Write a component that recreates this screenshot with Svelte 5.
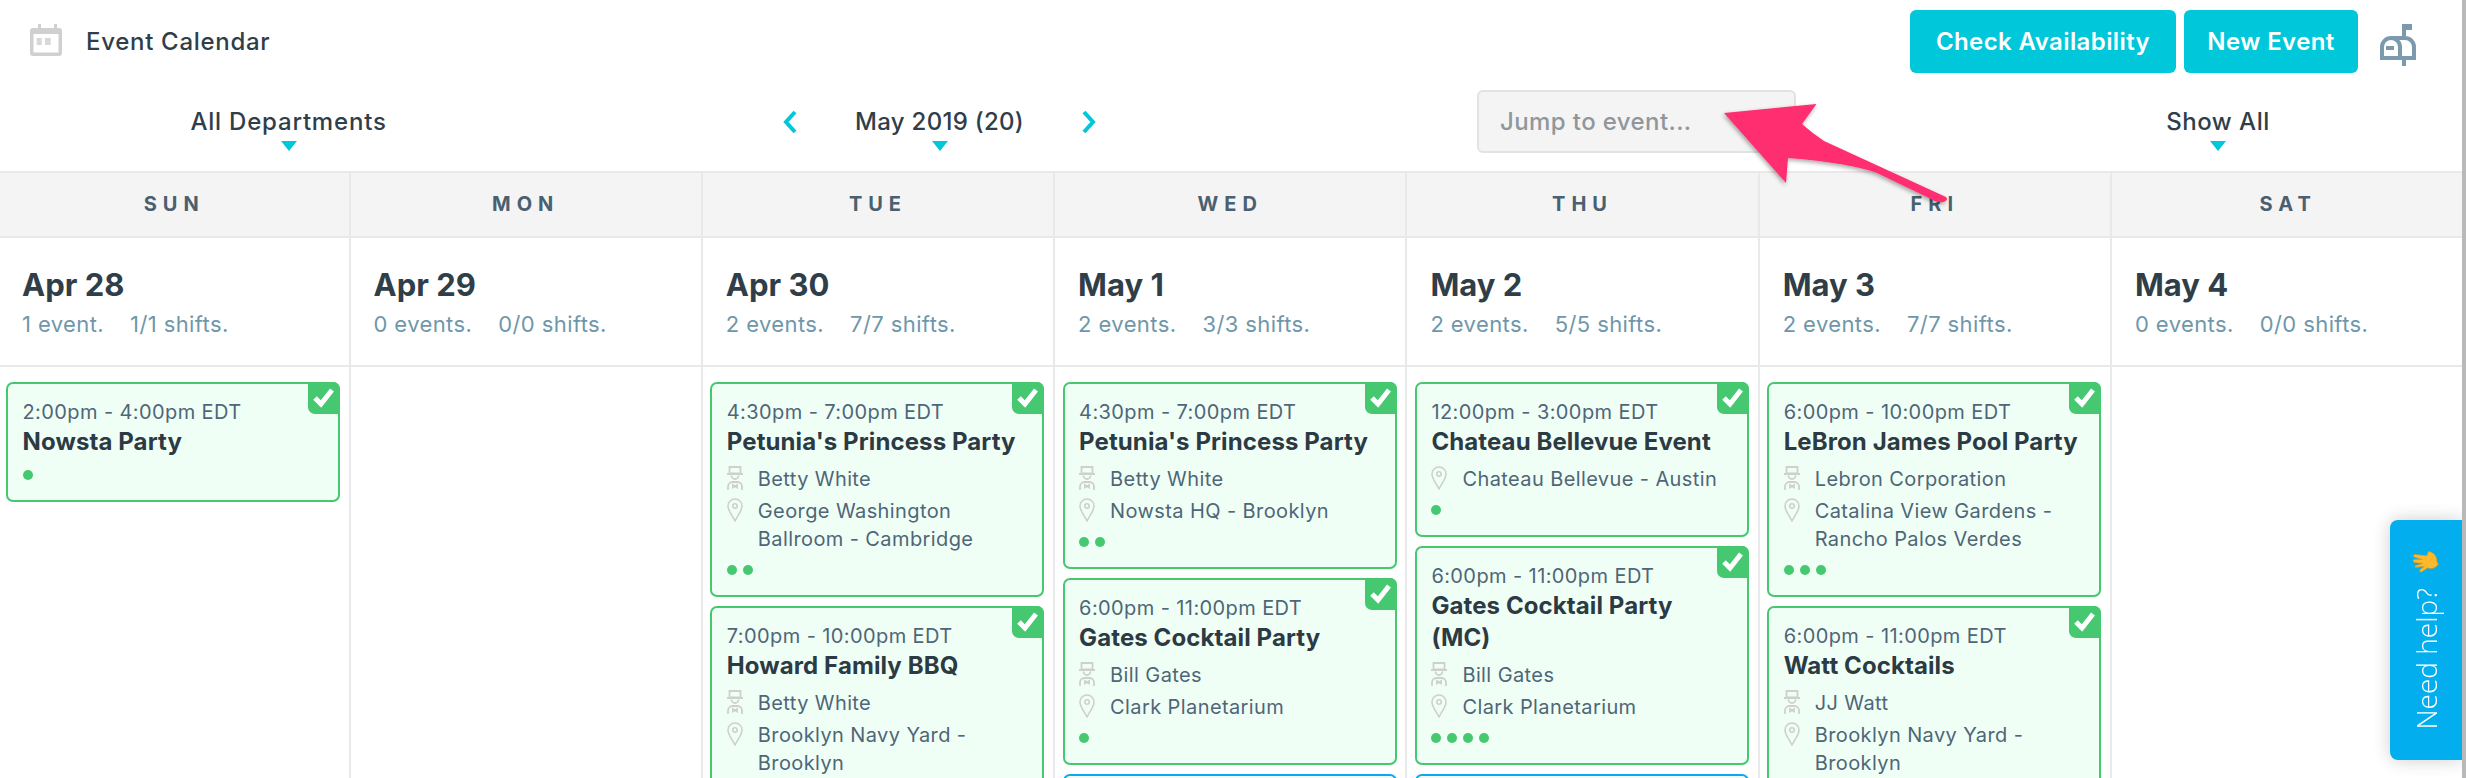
<script lang="ts">
	type Shift = {
		time: string;
		title: string;
		client?: string;
		venue?: string;
		dots: number;
		tone?: string;
	};

	const days: { name: string; date: string; events: string; shifts: string; cards: Shift[] }[] = [
		{
			name: 'SUN', date: 'Apr 28', events: '1 event.', shifts: '1/1 shifts.',
			cards: [{ time: '2:00pm - 4:00pm EDT', title: 'Nowsta Party', dots: 1 }]
		},
		{ name: 'MON', date: 'Apr 29', events: '0 events.', shifts: '0/0 shifts.', cards: [] },
		{
			name: 'TUE', date: 'Apr 30', events: '2 events.', shifts: '7/7 shifts.',
			cards: [
				{ time: '4:30pm - 7:00pm EDT', title: "Petunia's Princess Party", client: 'Betty White', venue: 'George Washington Ballroom - Cambridge', dots: 2 },
				{ time: '7:00pm - 10:00pm EDT', title: 'Howard Family BBQ', client: 'Betty White', venue: 'Brooklyn Navy Yard - Brooklyn', dots: 3 }
			]
		},
		{
			name: 'WED', date: 'May 1', events: '2 events.', shifts: '3/3 shifts.',
			cards: [
				{ time: '4:30pm - 7:00pm EDT', title: "Petunia's Princess Party", client: 'Betty White', venue: 'Nowsta HQ - Brooklyn', dots: 2 },
				{ time: '6:00pm - 11:00pm EDT', title: 'Gates Cocktail Party', client: 'Bill Gates', venue: 'Clark Planetarium', dots: 1 },
				{ time: '', title: '', dots: 0, tone: 'blue' }
			]
		},
		{
			name: 'THU', date: 'May 2', events: '2 events.', shifts: '5/5 shifts.',
			cards: [
				{ time: '12:00pm - 3:00pm EDT', title: 'Chateau Bellevue Event', venue: 'Chateau Bellevue - Austin', dots: 1 },
				{ time: '6:00pm - 11:00pm EDT', title: 'Gates Cocktail Party (MC)', client: 'Bill Gates', venue: 'Clark Planetarium', dots: 4 },
				{ time: '', title: '', dots: 0, tone: 'blue' }
			]
		},
		{
			name: 'FRI', date: 'May 3', events: '2 events.', shifts: '7/7 shifts.',
			cards: [
				{ time: '6:00pm - 10:00pm EDT', title: 'LeBron James Pool Party', client: 'Lebron Corporation', venue: 'Catalina View Gardens - Rancho Palos Verdes', dots: 3 },
				{ time: '6:00pm - 11:00pm EDT', title: 'Watt Cocktails', client: 'JJ Watt', venue: 'Brooklyn Navy Yard - Brooklyn', dots: 3 }
			]
		},
		{ name: 'SAT', date: 'May 4', events: '0 events.', shifts: '0/0 shifts.', cards: [] }
	];
</script>

<div class="page">
	<header class="topbar">
		<div class="brand">
			<svg class="cal-icon" viewBox="0 0 32 32" width="32" height="32">
				<path d="M8 0h3v5H8zM24 0h3v5h-3z" fill="#d0d0d0" />
				<path fill-rule="evenodd" d="M3 4h26a3 3 0 0 1 3 3v22a3 3 0 0 1-3 3H3a3 3 0 0 1-3-3V7a3 3 0 0 1 3-3zM3.500 10v18.500h25V10z" fill="#d0d0d0" />
				<rect x="6.700" y="14" width="5" height="7" fill="#d8d8d8" />
				<rect x="15" y="14" width="5.700" height="7" fill="#d8d8d8" />
			</svg>
			<span>Event Calendar</span>
		</div>
		<div class="actions">
			<button class="btn check">Check Availability</button>
			<button class="btn new">New Event</button>
			<svg class="mailbox" viewBox="0 0 36 42" width="36" height="42">
				<path d="M22 0h10v6H26v6h-4zM22 36h4v6h-4z" fill="#7c9aad" />
				<path d="M2 34V23a9 9 0 0 1 9-9h14a9 9 0 0 1 9 9v11zM20 34V23a9 9 0 0 0-9-9" fill="none" stroke="#7c9aad" stroke-width="4" />
				<rect x="6" y="22" width="8" height="4" fill="#7c9aad" />
			</svg>
		</div>
	</header>

	<div class="filters">
		<div class="filter departments"><span>All Departments</span><i class="caret"></i></div>
		<div class="month">
			<svg viewBox="0 0 16 24" width="16" height="24"><path d="M13 2 4 12l9 10" fill="none" stroke="#00c7d9" stroke-width="4" /></svg>
			<div class="filter"><span>May 2019 (20)</span><i class="caret"></i></div>
			<svg viewBox="0 0 16 24" width="16" height="24"><path d="m3 2 9 10-9 10" fill="none" stroke="#00c7d9" stroke-width="4" /></svg>
		</div>
		<input class="jump" placeholder="Jump to event..." />
		<div class="filter showall"><span>Show All</span><i class="caret"></i></div>
	</div>

	<section class="week">
		{#each days as day}
			<div class="day">
				<div class="day-name">{day.name}</div>
				<div class="day-info">
					<h2>{day.date}</h2>
					<p><span>{day.events}</span><span>{day.shifts}</span></p>
				</div>
				<div class="day-cards">
					{#each day.cards as card}
						<article class="card {card.tone ?? ''}">
							{#if !card.tone}
								<div class="tick">
									<svg viewBox="0 0 32 32" width="32" height="32"><path d="M7 16l6 6L24 8" fill="none" stroke="#fff" stroke-width="5" /></svg>
								</div>
							{/if}
							<div class="time">{card.time}</div>
							<div class="title">{card.title}</div>
							{#if card.client || card.venue}
								<div class="rows">
									{#if card.client}
										<div class="row">
											<svg viewBox="0 0 16 24" width="16" height="24">
												<path d="M2.500 1h11v6.500h-11zM0 8h16M4.500 9.500a3.500 3.500 0 0 0 7 0M1 24v-3.500A4.500 4.500 0 0 1 5.500 16h5a4.500 4.500 0 0 1 4.500 4.500V24M6 19l4 2.500V19l-4 2.500z" fill="none" stroke="#cfcfcf" stroke-width="1.800" />
											</svg>
											<span>{card.client}</span>
										</div>
									{/if}
									{#if card.venue}
										<div class="row">
											<svg viewBox="0 0 16 24" width="16" height="24">
												<path d="M8 23C5 17 1 13 1 8a7 7 0 0 1 14 0c0 5-4 9-7 15z" fill="none" stroke="#cfcfcf" stroke-width="1.600" />
												<circle cx="8" cy="8" r="2.200" fill="none" stroke="#cfcfcf" stroke-width="1.600" />
											</svg>
											<span>{card.venue}</span>
										</div>
									{/if}
								</div>
							{/if}
							<div class="dots">
								{#each Array(card.dots) as _}
									<i></i>
								{/each}
							</div>
						</article>
					{/each}
				</div>
			</div>
		{/each}
	</section>

	<svg class="arrow" viewBox="0 0 240 110" width="240" height="110">
		<defs>
			<filter id="arrow-shadow" x="-10%" y="-10%" width="120%" height="130%">
				<feDropShadow dx="-1" dy="2" stdDeviation="2" flood-color="#000" flood-opacity="0.35" />
			</filter>
		</defs>
		<path d="M4 13 96.500 4 82 24Q92 33 104 41L226 97q3 3-3 5-5 1-12-3L157 73Q130 63 68 58L66 83Z" fill="#ff2d6f" filter="url(#arrow-shadow)" />
	</svg>

	<aside class="help">
		<span>Need help?</span>
		<svg class="wave" viewBox="0 0 26 26" width="26" height="26">
			<path d="M24 13c1-6-3-10-7-11l-2 4L3 3C1 3 1 5 3 6l7 3-8-1c-2 0-2 2 0 3l8 2-7 1c-2 0-2 2 0 2l8 0-5 3c-1 1 0 3 2 2l6-3c3 2 7 2 11-2z" fill="#fdb92d" stroke="#e69a10" stroke-width="0.600" />
		</svg>
	</aside>
	<div class="edge"></div>
</div>

<style>
	:global(body) {
		margin: 0;
		overflow: hidden;
	}

	.page {
		position: relative;
		width: 2466px;
		height: 778px;
		overflow: hidden;
		background: #fff;
		color: #2f3e48;
		font-family: Inter, "Noto Sans", sans-serif;
	}

	.topbar {
		display: flex;
		justify-content: space-between;
		height: 83px;
		padding: 10px 50px 0 30px;
		box-sizing: border-box;
	}

	.brand {
		display: flex;
		align-items: flex-start;
		gap: 24px;
		padding-top: 14px;
		font-size: 24px;
		font-weight: 500;
		line-height: 36px;
		letter-spacing: 0.7px;
	}

	.cal-icon {
		display: block;
	}

	.actions {
		display: flex;
		align-items: flex-start;
		gap: 8px;
	}

	.btn {
		height: 63px;
		border: none;
		border-radius: 6px;
		background: #00c7d9;
		color: #fff;
		font: 600 24px Inter, "Noto Sans", sans-serif;
		letter-spacing: 0.4px;
		padding: 0;
	}

	.check {
		width: 266px;
	}

	.new {
		width: 174px;
	}

	.mailbox {
		margin: 14px 0 0 14px;
	}

	.filters {
		position: relative;
		height: 88px;
		padding-top: 7px;
		box-sizing: border-box;
		display: flex;
		align-items: flex-start;
	}

	.filter {
		display: flex;
		flex-direction: column;
		align-items: center;
		font-size: 24px;
		font-weight: 500;
		line-height: 32px;
		padding-top: 16px;
		white-space: nowrap;
	}

	.caret {
		margin-top: 3px;
		width: 0;
		height: 0;
		border-left: 8px solid transparent;
		border-right: 8px solid transparent;
		border-top: 10px solid #00c7d9;
	}

	.departments {
		margin-left: 191px;
		width: 195px;
		letter-spacing: 0.8px;
	}

	.month {
		display: flex;
		align-items: flex-start;
		gap: 57px;
		margin-left: 396px;
	}

	.month svg {
		margin-top: 20px;
	}

	.month .filter {
		width: 169px;
		letter-spacing: 0.3px;
	}

	.jump {
		margin-left: 380px;
		width: 319px;
		height: 63px;
		box-sizing: border-box;
		padding: 0 21px;
		background: #f4f4f4;
		border: 2px solid #e2e2e2;
		border-radius: 6px;
		font: 500 24px Inter, "Noto Sans", sans-serif;
		letter-spacing: 0.4px;
	}

	.jump::placeholder {
		color: #8f979c;
	}

	.showall {
		margin-left: 371px;
		width: 102px;
		letter-spacing: 0.5px;
	}

	.week {
		display: grid;
		grid-template-columns: 350.500px repeat(6, 352.300px);
		border-top: 2px solid #e9e9e9;
	}

	.day {
		border-right: 2px solid #e9e9e9;
		height: 607px;
		box-sizing: border-box;
	}

	.day:last-child {
		border-right: none;
	}

	.day-name {
		height: 65px;
		background: #f4f4f4;
		border-bottom: 2px solid #e9e9e9;
		box-sizing: border-box;
		text-align: center;
		font-size: 20px;
		font-weight: 700;
		letter-spacing: 6px;
		line-height: 62px;
		color: #4a6070;
	}

	.day-info {
		height: 129px;
		padding: 27px 23px 0;
		box-sizing: border-box;
		border-bottom: 2px solid #e9e9e9;
	}

	.day:first-child .day-info {
		padding-left: 22px;
	}

	.day-info h2 {
		margin: 0;
		font-size: 31px;
		font-weight: 700;
		line-height: 40px;
	}

	.day-info p {
		display: flex;
		gap: 26px;
		margin: 4px 0 0;
		font-size: 22px;
		line-height: 30px;
		letter-spacing: 0.4px;
		color: #6f97aa;
	}

	.day-cards {
		display: flex;
		flex-direction: column;
		gap: 9px;
		padding: 15px 9px 0 7.500px;
	}

	.day:first-child .day-cards {
		padding-left: 6px;
	}

	.card {
		position: relative;
		box-sizing: border-box;
		width: 334px;
		padding: 14px 14px 20px 14.500px;
		background: #f0fff6;
		border: 2px solid #45c870;
		border-radius: 7px;
		flex: none;
	}

	.card.blue {
		background: #eef9ff;
		border-color: #0ea8ee;
		height: 120px;
	}

	.tick {
		position: absolute;
		top: -2px;
		right: -2px;
		width: 32px;
		height: 32px;
		background: #45c870;
		border-radius: 0 7px 0 7px;
	}

	.tick svg {
		display: block;
	}

	.time {
		font-size: 20px;
		line-height: 28px;
		letter-spacing: 0.4px;
		color: #4e6677;
	}

	.title {
		font-size: 24px;
		font-weight: 700;
		line-height: 32px;
		letter-spacing: 0.1px;
		color: #2c3a44;
	}

	.rows {
		display: flex;
		flex-direction: column;
		gap: 4px;
		padding-top: 7px;
		margin-bottom: 1px;
	}

	.row {
		display: flex;
		gap: 15px;
		font-size: 20px;
		line-height: 28px;
		letter-spacing: 0.4px;
		color: #4e6677;
	}

	.row svg {
		flex: none;
		margin-top: 1px;
	}

	.dots {
		display: flex;
		gap: 6px;
		height: 10px;
		margin-top: 12px;
	}

	.dots i {
		width: 10px;
		height: 10px;
		border-radius: 50%;
		background: #45c870;
	}

	.arrow {
		position: absolute;
		left: 1720px;
		top: 100px;
	}

	.help {
		position: absolute;
		left: 2390px;
		top: 520px;
		width: 72px;
		height: 240px;
		box-sizing: border-box;
		padding: 30px 0 0;
		display: flex;
		flex-direction: column-reverse;
		justify-content: flex-end;
		align-items: center;
		gap: 12px;
		background: #03aeef;
		border-radius: 8px 0 0 8px;
		box-shadow: 0 0 18px rgba(0, 0, 0, 0.2);
		color: #fff;
		font: 300 28px "Open Sans", sans-serif;
	}

	.help span {
		writing-mode: vertical-rl;
		transform: rotate(180deg);
		white-space: nowrap;
		line-height: 34px;
	}

	.wave {
		transform: rotate(-8deg);
	}

	.edge {
		position: absolute;
		right: 0;
		top: 0;
		width: 4px;
		height: 778px;
		background: #b9b9b9;
	}
</style>
